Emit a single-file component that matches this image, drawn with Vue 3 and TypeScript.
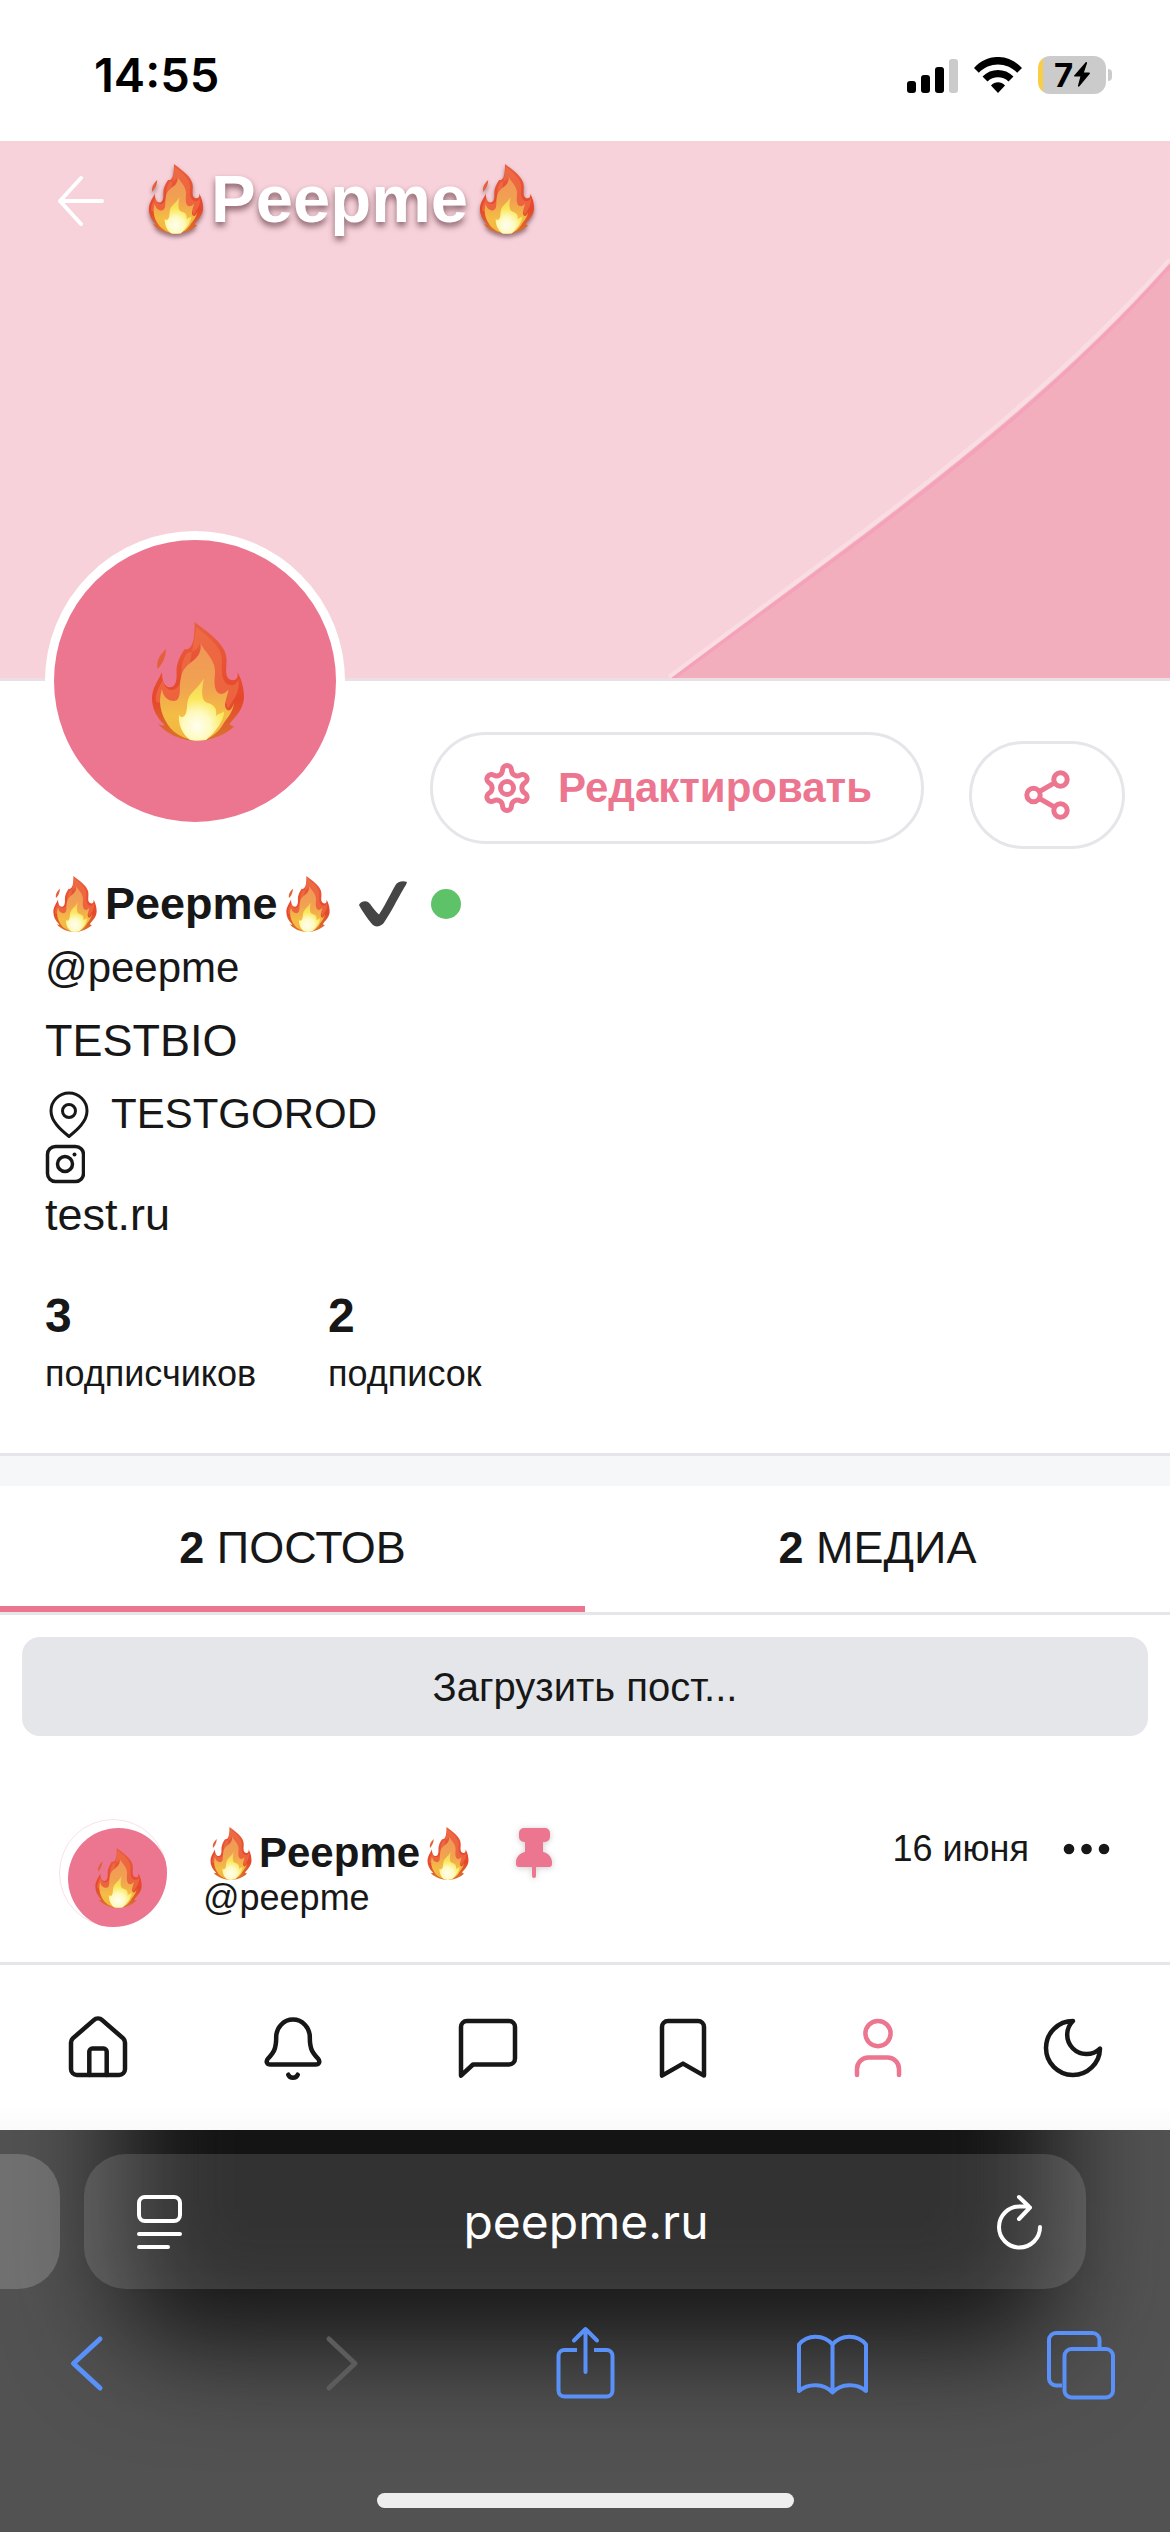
<script setup lang="ts">
import { ref } from 'vue'

interface NavItem {
  id: string
  label: string
  paths: string[]
}

const navItems: NavItem[] = [
  {
    id: 'home',
    label: 'Главная',
    paths: [
      'M3 10.2a2 2 0 0 1 .6-1.4l7-6.1a2 2 0 0 1 2.8 0l7 6.1a2 2 0 0 1 .6 1.4V19a2 2 0 0 1-2 2H5a2 2 0 0 1-2-2z',
      'M9.1 21v-7.8a1 1 0 0 1 1-1h3.8a1 1 0 0 1 1 1V21',
    ],
  },
  {
    id: 'alerts',
    label: 'Уведомления',
    paths: [
      'M6.4 8.4a5.6 5.9 0 0 1 11.2 0c0 4.2 1 5.3 2.7 7.1.9 1 .4 2-.8 2h-15c-1.2 0-1.7-1-.8-2 1.7-1.8 2.7-2.9 2.7-7.1z',
      'M10.4 20.9c.6 1.4 2.6 1.4 3.2 0',
    ],
  },
  {
    id: 'messages',
    label: 'Сообщения',
    paths: ['M3 21.2V5a2 2 0 0 1 2-2h14a2 2 0 0 1 2 2v10.5a2 2 0 0 1-2 2H7z'],
  },
  {
    id: 'bookmarks',
    label: 'Закладки',
    paths: ['M5 21.2V5a2 2 0 0 1 2-2h10a2 2 0 0 1 2 2v16.2l-7-4z'],
  },
  {
    id: 'profile',
    label: 'Профиль',
    paths: [
      'M12 3a4.2 4.2 0 1 1 0 8.4 4.2 4.2 0 0 1 0-8.4z',
      'M5 21v-2a3.8 3.8 0 0 1 3.8-3.8h6.4a3.8 3.8 0 0 1 3.8 3.8v2',
    ],
  },
  {
    id: 'theme',
    label: 'Тёмная тема',
    paths: ['M12 3a6.4 6.4 0 0 0 9 9.2 9 9 0 1 1-9-9.2z'],
  },
]

const tabs = [
  { id: 'posts', count: 2, label: 'ПОСТОВ' },
  { id: 'media', count: 2, label: 'МЕДИА' },
]

const stats = [
  { value: 3, label: 'подписчиков' },
  { value: 2, label: 'подписок' },
]

const activeTab = ref('posts')
const activeNav = ref('profile')

// Six rounded teeth: one tooth and its valley, turned by 60° each time.
function gearPath(center: number): string {
  const at = (x: number, y: number, turn: number): string => {
    const a = (turn * Math.PI) / 3
    const px = center + x * Math.cos(a) - y * Math.sin(a)
    const py = center + x * Math.sin(a) + y * Math.cos(a)
    return `${px.toFixed(2)} ${py.toFixed(2)}`
  }
  let d = `M${at(-4.5, -18, 0)}`
  for (let i = 0; i < 6; i++) {
    d += `A4.5 4.5 0 0 1 ${at(4.5, -18, i)}`
    d += `C${at(4.5, -13.5, i)} ${at(9.4, -10.6, i)} ${at(13.34, -12.9, i)}`
  }
  return d + 'z'
}
const gear = gearPath(25)
</script>

<template>
  <div class="screen">
    <svg class="defs" width="0" height="0" aria-hidden="true">
      <defs>
        <linearGradient id="flame-outer" x1="0" y1="0" x2="0" y2="1">
          <stop offset="0" stop-color="#e9603f" />
          <stop offset="0.65" stop-color="#e6472a" />
          <stop offset="1" stop-color="#d9742f" />
        </linearGradient>
        <linearGradient id="flame-mid" x1="0" y1="0" x2="0" y2="1">
          <stop offset="0" stop-color="#f0965a" />
          <stop offset="0.45" stop-color="#f1a350" />
          <stop offset="0.75" stop-color="#f4bd44" />
          <stop offset="1" stop-color="#f3b53c" />
        </linearGradient>
        <radialGradient id="flame-core" gradientUnits="userSpaceOnUse" cx="45" cy="104" r="46">
          <stop offset="0" stop-color="#fffef0" />
          <stop offset="0.3" stop-color="#fefac0" />
          <stop offset="0.6" stop-color="#fae75a" />
          <stop offset="1" stop-color="#f6cf5c" />
        </radialGradient>
        <symbol id="flame" viewBox="0 0 92 119">
          <path fill="url(#flame-outer)" d="M42.5 0C54 9 75 22 74.6 38C74.5 45 73 52 76 56C80 60 87 59 85.5 50C90 58 92 67 92 75C92 87 83 95 77.5 102C79 104 81 104.5 82.3 104.3C73 113 59 119 45 119C29 119 12 111 5 100C7 103 10 104 12.6 103C4 95 0 86 0 76C0 66 6 59 10 50C10 60 13 65.5 18.4 65.3C24 65 25 57 24.5 50C24 42 28 34 32.5 27.3C38 28 43 24 42.5 0z" />
          <path fill="#ef7148" d="M44.5 5C56 15 71 25 70 40C69 52 71 62 78 63C84 64 86 59 86.5 57C88 74 80 78 76 87C72 70 64 74 61 64L48 20C47 28 40 30 35 31C28 42 30 47 29 57C27 71 13 72 11 58C5 68 3 73 4 80L30 85z" opacity="0.65" />
          <path fill="url(#flame-mid)" d="M48.2 20.3C51 29 64 37 63 51C62 61 62 71 69 72C73 72 74 69 76.5 68C75 76 70 85 76 88.5C79 89 81 84 82 81C81 91 74 97 70 104C64 113 56 118 45 118C34 118 22 112 16 103C8 91 6 79 10 67C11 75 16 79 22 79C30 78 27 66 28.5 58C30 46 36 43 42 38C47 34 50 28 48.2 20.3z" />
          <path fill="url(#flame-core)" d="M52 56C50 67 48 79 56 81C63 83 65 87 64 94C67 91 71 91 72 89C73 98 62 112 54 118C48 119 42 119 38 118C30 112 26 102 27 93C29 96 32 96 34 91C36 84 34 78 39 72C44 66 48 63 52 56z" />
          <path fill="#e4603c" d="M14 27C14 35 10 43 5.5 47C4 38 8 33 14 27z" />
        </symbol>
      </defs>
    </svg>

    <div class="status">
      <time class="clock">14:55</time>
      <div class="indicators">
        <svg width="51" height="36" viewBox="0 0 51 36" aria-label="Сигнал">
          <rect x="0" y="24" width="9" height="12" rx="3" />
          <rect x="14" y="18" width="9" height="18" rx="3" />
          <rect x="28" y="10" width="9" height="26" rx="3" />
          <rect x="42" y="2" width="9" height="34" rx="3" fill="#cbcbcb" />
        </svg>
        <svg width="48" height="36" viewBox="0 0 48 36" aria-label="Wi-Fi">
          <path d="M0 11C13-3.7 35-3.7 48 11l-4.8 4.8C32.500 4.7 15.5 4.7 4.8 15.8z" />
          <path d="M8.5 19.5c8.6-8.6 22.4-8.6 31 0l-5 5c-5.8-5.6-15.2-5.6-21 0z" />
          <path d="M17 28.4c3.9-4.1 10.1-4.1 14 0L24 36z" />
        </svg>
        <div class="battery">
          <div class="battery-body">
            <span>7</span>
            <svg width="16" height="25" viewBox="0 0 16 25" aria-hidden="true">
              <path d="M11.5.4L.4 13.2c-.6.7-.3 1.4.6 1.4h5.4L4 23.600c-.3 1.2.7 1.5 1.4.7L15.6 12c.6-.8.3-1.6-.6-1.6H9.9L13 1.2c.3-1.1-.7-1.6-1.5-.8z" />
            </svg>
          </div>
          <span class="battery-tip"></span>
        </div>
      </div>
    </div>

    <header class="cover">
      <svg class="cover-art" viewBox="0 0 1170 537" preserveAspectRatio="xMaxYMax slice" aria-hidden="true">
        <rect width="1170" height="537" fill="#f7d2da" />
        <path d="M671 537C860 395 1030 280 1170 122V537z" fill="#f3aebd" />
        <path d="M669 536C858 393 1028 278 1170 118" fill="none" stroke="#f9dde2" stroke-width="4" />
        <path d="M673 538C862 397 1032 282 1172 123" fill="none" stroke="#f4a2ba" stroke-width="3" />
      </svg>
      <div class="cover-bar">
        <button class="icon-button" type="button" aria-label="Назад">
          <svg width="48" height="54" viewBox="0 0 48 54" fill="none" stroke="#fff" stroke-width="4" stroke-linecap="round" stroke-linejoin="round">
            <path d="M45 29H3M24 6L3 29l21 23" />
          </svg>
        </button>
        <h1>
          <svg class="flame-lg" role="img" aria-label="огонь"><use href="#flame" /></svg>
          <span>Peepme</span>
          <svg class="flame-lg" role="img" aria-label="огонь"><use href="#flame" /></svg>
        </h1>
      </div>
    </header>

    <main>
      <section class="profile">
        <div class="profile-top">
          <div class="avatar">
            <svg width="92" height="119" aria-hidden="true"><use href="#flame" /></svg>
          </div>
          <div class="actions">
            <button class="pill edit" type="button">
              <svg width="50" height="50" viewBox="0 0 50 50" fill="none" stroke="currentColor" stroke-width="5" stroke-linejoin="round" aria-hidden="true">
                <path :d="gear" />
                <circle cx="25" cy="25" r="6.5" />
              </svg>
              Редактировать
            </button>
            <button class="pill share" type="button" aria-label="Поделиться">
              <svg width="46" height="50" viewBox="0 0 46 50" fill="none" stroke="currentColor" stroke-width="5">
                <circle cx="36.5" cy="9.5" r="6.7" />
                <circle cx="9.5" cy="25" r="6.7" />
                <circle cx="36.5" cy="40.5" r="6.7" />
                <path d="M15.5 21.5l15-8.6M15.5 28.5l15 8.6" />
              </svg>
            </button>
          </div>
        </div>

        <h2 class="name">
          <svg class="flame-md" role="img" aria-label="огонь"><use href="#flame" /></svg>
          <span>Peepme</span>
          <svg class="flame-md" role="img" aria-label="огонь"><use href="#flame" /></svg>
          <svg class="check" width="48" height="46" viewBox="0 0 48 46" role="img" aria-label="Подтверждён">
            <path fill="#454545" d="M0 24C1 21 6 19 9 21C12 23 14 28 20 33.5C24 28 31 14 36 5C38 .5 44-.5 47.5.8C48.500 1.500 47 4 45 7C38 19 31 33 26 40C22.500 46.500 16 47 12.5 42.500C8 37 2.500 29 0 24z" />
          </svg>
          <span class="online" role="img" aria-label="В сети"></span>
        </h2>
        <p class="handle">@peepme</p>
        <p class="bio">TESTBIO</p>
        <p class="place">
          <svg width="44" height="48" viewBox="0 0 44 48" fill="none" stroke="currentColor" stroke-width="3" stroke-linejoin="round" aria-hidden="true">
            <path d="M24 46.500C16 40 6 31.500 6 21a18 18 0 0 1 36 0C42 31.500 32 40 24 46.500z" />
            <circle cx="24" cy="21" r="6.500" />
          </svg>
          TESTGOROD
        </p>
        <a class="insta" href="#" aria-label="Instagram">
          <svg width="40" height="40" viewBox="0 0 40 40" fill="none" stroke="currentColor" stroke-width="3.500">
            <rect x="2.500" y="2.500" width="36" height="35" rx="8" />
            <circle cx="20" cy="20" r="7.500" />
            <circle cx="29.500" cy="10.500" r="2" fill="currentColor" stroke="none" />
          </svg>
        </a>
        <a class="site" href="#">test.ru</a>

        <ul class="stats">
          <li v-for="s in stats" :key="s.label">
            <strong>{{ s.value }}</strong>
            <span>{{ s.label }}</span>
          </li>
        </ul>
      </section>

      <div class="tabs" role="tablist">
        <button
          v-for="t in tabs"
          :key="t.id"
          type="button"
          role="tab"
          class="tab"
          :class="{ active: t.id === activeTab }"
          :aria-selected="t.id === activeTab"
          @click="activeTab = t.id"
        >
          <b>{{ t.count }}</b> {{ t.label }}
        </button>
      </div>

      <section class="feed">
        <button class="load" type="button">Загрузить пост...</button>

        <article class="post">
          <svg class="post-avatar" width="108" height="108" viewBox="0 0 108 108" aria-hidden="true">
            <clipPath id="post-avatar-clip"><circle cx="54" cy="54" r="54" /></clipPath>
            <circle cx="54" cy="54" r="53.5" fill="#fff" stroke="#fae0e6" stroke-width="1" />
            <circle cx="59.500" cy="59.500" r="50.500" fill="#ec7690" clip-path="url(#post-avatar-clip)" />
            <use href="#flame" x="36" y="29" width="47" height="60" />
          </svg>
          <div class="author">
            <h3>
              <svg class="flame-sm" role="img" aria-label="огонь"><use href="#flame" /></svg>
              <span>Peepme</span>
              <svg class="flame-sm" role="img" aria-label="огонь"><use href="#flame" /></svg>
              <svg class="pin" width="36" height="50" viewBox="0 0 36 50" role="img" aria-label="Закреплено">
                <path fill="#ec7690" d="M8 0h21a5 5 0 0 1 5 5v4a5 5 0 0 1-5 5h-2v10c5 1 9 5 9 10v2a3 3 0 0 1-3 3H20v9a2 2 0 0 1-4 0v-9H3a3 3 0 0 1-3-3v-2c0-5 4-9 9-10V14H8a5 5 0 0 1-5-5V5a5 5 0 0 1 5-5z" />
              </svg>
            </h3>
            <span class="post-handle">@peepme</span>
          </div>
          <div class="post-meta">
            <time>16 июня</time>
            <button class="icon-button" type="button" aria-label="Ещё">
              <svg width="48" height="12" viewBox="0 0 48 12" fill="#171717">
                <circle cx="6" cy="6" r="5.300" />
                <circle cx="23.500" cy="6" r="5.300" />
                <circle cx="41" cy="6" r="5.300" />
              </svg>
            </button>
          </div>
        </article>
      </section>
    </main>

    <nav class="nav">
      <button
        v-for="n in navItems"
        :key="n.id"
        type="button"
        class="nav-item"
        :class="{ active: n.id === activeNav }"
        :aria-label="n.label"
        @click="activeNav = n.id"
      >
        <svg width="72" height="72" viewBox="0 0 24 24" fill="none" stroke="currentColor" stroke-width="1.5" stroke-linecap="round" stroke-linejoin="round">
          <path v-for="p in n.paths" :key="p" :d="p" />
        </svg>
      </button>
    </nav>

    <footer class="browser">
      <div class="address-row">
        <div class="prev-tab"></div>
        <div class="address">
          <button class="icon-button" type="button" aria-label="Вид страницы">
            <svg width="46" height="54" viewBox="0 0 46 54" fill="none" stroke="#fff" stroke-width="4" stroke-linecap="round">
              <rect x="2" y="2" width="41" height="24" rx="6" />
              <path d="M2 39h41M2 52h29" />
            </svg>
          </button>
          <span class="url">peepme.ru</span>
          <button class="icon-button" type="button" aria-label="Обновить">
            <svg width="54" height="56" viewBox="-8 0 54 56" fill="none" stroke="#fff" stroke-width="4" stroke-linecap="round" stroke-linejoin="round">
              <path d="M43 33A20.500 20.500 0 1 1 22.500 12.500H32M22 3l11 10.500L22 25" />
            </svg>
          </button>
        </div>
      </div>
      <div class="tools">
        <button class="icon-button" type="button" aria-label="Назад">
          <svg width="72" height="74" viewBox="0 0 72 74" fill="none" stroke="currentColor" stroke-width="5" stroke-linecap="round" stroke-linejoin="round">
            <path d="M50 13L23.500 37.500 50 62" />
          </svg>
        </button>
        <button class="icon-button" type="button" aria-label="Вперёд" disabled>
          <svg width="72" height="74" viewBox="0 0 72 74" fill="none" stroke="#5c5c5c" stroke-width="5" stroke-linecap="round" stroke-linejoin="round">
            <path d="M30 13l26 24.500L30 62" />
          </svg>
        </button>
        <button class="icon-button" type="button" aria-label="Поделиться">
          <svg width="72" height="74" viewBox="0 0 72 74" fill="none" stroke="currentColor" stroke-width="4" stroke-linecap="round" stroke-linejoin="round">
            <path stroke-linecap="butt" d="M30 24H17.500a6 6 0 0 0-6 6v34.500a6 6 0 0 0 6 6h42a6 6 0 0 0 6-6V30a6 6 0 0 0-6-6H47" />
            <path d="M38.500 46V4M27 14.500L38.500 3 50 14.500" />
          </svg>
        </button>
        <button class="icon-button" type="button" aria-label="Закладки">
          <svg width="72" height="74" viewBox="0 0 72 74" fill="none" stroke="currentColor" stroke-width="4" stroke-linejoin="round">
            <path d="M36.500 18.500C28 8 11 8 3 18.500V65c9-8 25-8 33.500 1.500C45 57 61 57 70 65V18.500C62 8 45 8 36.500 18.500zV66" />
          </svg>
        </button>
        <button class="icon-button" type="button" aria-label="Вкладки">
          <svg width="72" height="74" viewBox="0 0 72 74" fill="none" stroke="currentColor" stroke-width="4">
            <path d="M18 59.500H12a7 7 0 0 1-7-7V14a7 7 0 0 1 7-7h36.500a7 7 0 0 1 7 7v9" />
            <rect x="20.500" y="23" width="48.500" height="48.500" rx="7" />
          </svg>
        </button>
      </div>
      <div class="home-bar"></div>
    </footer>
  </div>
</template>

<style>
body {
  margin: 0;
  background: #fff;
}
</style>

<style scoped>
.screen {
  display: flex;
  flex-direction: column;
  min-height: 100vh;
  background: #fff;
  color: #171717;
  font-family: "Liberation Sans", Arial, sans-serif;
  font-size: 42px;
  line-height: 48px;
}

svg {
  display: block;
  flex: none;
}

.defs {
  position: absolute;
}

h1,
h2,
h3,
p,
ul {
  margin: 0;
  padding: 0;
}

button {
  margin: 0;
  padding: 0;
  border: 0;
  background: none;
  color: inherit;
  font: inherit;
  cursor: pointer;
}

a {
  color: inherit;
  text-decoration: none;
}

main {
  flex: 1;
}

.icon-button {
  flex: none;
}

/* status bar */
.status {
  display: flex;
  align-items: center;
  justify-content: space-between;
  height: 141px;
  padding: 8px 58px 0 94px;
  box-sizing: border-box;
  font-family: Inter, sans-serif;
}

.clock {
  color: #000;
  font-size: 47px;
  font-weight: 600;
}

.indicators {
  display: flex;
  align-items: center;
  gap: 16px;
}

.battery {
  display: flex;
  align-items: center;
  gap: 2px;
}

.battery-body {
  display: flex;
  align-items: center;
  justify-content: center;
  gap: 1px;
  width: 68px;
  height: 38px;
  border-radius: 12px;
  background: linear-gradient(to right, #f7ce46 5px, #cbcbcb 5px);
  color: #000;
  font-size: 33px;
  font-weight: 700;
  line-height: 38px;
}

.battery-tip {
  width: 4px;
  height: 12px;
  border-radius: 0 6px 6px 0;
  background: #cbcbcb;
}

/* cover */
.cover {
  position: relative;
  height: 537px;
  border-bottom: 3px solid #e9dfe4;
}

.cover-art {
  position: absolute;
  inset: 0;
  width: 100%;
  height: 100%;
}

.cover-bar {
  position: relative;
  display: flex;
  align-items: center;
  gap: 32px;
  padding: 19px 57px;
}

.cover-bar h1 {
  display: flex;
  align-items: center;
  color: #fff;
  font-size: 67px;
  line-height: 78px;
  text-shadow: 0 4px 6px rgba(60, 20, 30, 0.6);
}

.flame-lg {
  width: 56px;
  height: 70px;
  margin: 0 7px 0 11px;
  filter: drop-shadow(0 3px 2px rgba(60, 20, 30, 0.5));
}

.flame-md {
  width: 44px;
  height: 56px;
  margin: 0 8px;
}

.flame-sm {
  width: 42px;
  height: 53px;
  margin: 0 7px;
}

/* profile */
.profile {
  padding: 0 45px 58px;
  border-bottom: 3px solid #e5e6ea;
}

.profile-top {
  display: flex;
  align-items: flex-start;
  justify-content: space-between;
  margin-bottom: 28px;
}

.avatar {
  position: relative;
  display: flex;
  align-items: center;
  justify-content: center;
  box-sizing: border-box;
  width: 300px;
  height: 300px;
  margin-top: -150px;
  padding-left: 6px;
  border: 9px solid #fff;
  border-radius: 50%;
  background: #ec7690;
}

.actions {
  display: flex;
  align-items: flex-start;
  gap: 45px;
  padding-top: 51px;
}

.pill {
  display: flex;
  align-items: center;
  border: 3px solid #e5e6ea;
  border-radius: 56px;
  color: #ec7690;
  font-weight: 700;
}

.edit {
  gap: 26px;
  padding: 28px 49px;
}

.share {
  justify-content: center;
  margin-top: 9px;
  padding: 26px 52px;
}

.name {
  display: flex;
  align-items: center;
  height: 54px;
  font-size: 45px;
  line-height: 54px;
}

.check {
  margin-left: 21px;
}

.online {
  width: 30px;
  height: 30px;
  margin-left: 24px;
  border-radius: 50%;
  background: #5ec269;
}

.handle {
  margin-top: 13px;
}

.bio {
  margin: 22px 0;
  font-size: 45px;
  line-height: 54px;
}

.place {
  display: flex;
  align-items: center;
  gap: 22px;
  margin-bottom: 6px;
}

.insta {
  display: flex;
  margin-bottom: 4px;
}

.site {
  display: block;
  font-size: 45px;
  line-height: 54px;
}

.stats {
  display: flex;
  gap: 72px;
  margin-top: 47px;
  list-style: none;
}

.stats li {
  display: flex;
  flex-direction: column;
  gap: 10px;
  font-size: 36px;
  line-height: 42px;
}

.stats strong {
  font-size: 48px;
  line-height: 54px;
}

/* tabs */
.tabs {
  display: flex;
  border-top: 30px solid #f6f7f9;
  border-bottom: 3px solid #e5e6ea;
}

.tab {
  flex: 1;
  padding: 35px 0 31px;
  border-bottom: 6px solid transparent;
  font-size: 45px;
  line-height: 54px;
}

.tab.active {
  border-bottom-color: #ec7690;
}

/* feed */
.feed {
  padding: 22px 22px 35px;
}

.load {
  display: block;
  width: 100%;
  padding: 26px 0 25px;
  border-radius: 18px;
  background: #e5e6ea;
  font-size: 40px;
}

.post {
  display: flex;
  align-items: flex-start;
  gap: 36px;
  padding: 83px 37px 0;
}

.author {
  flex: 1;
  padding-top: 10px;
}

.author h3 {
  display: flex;
  align-items: center;
  height: 48px;
  font-size: 42px;
}

.pin {
  margin-left: 40px;
  filter: drop-shadow(0 1px 3px rgba(0, 0, 0, 0.2));
}

.post-handle {
  display: block;
  font-size: 36px;
  line-height: 42px;
}

.post-meta {
  display: flex;
  align-items: center;
  gap: 34px;
  padding-top: 9px;
  font-size: 36px;
  line-height: 42px;
}

/* site navigation */
.nav {
  display: flex;
  border-top: 3px solid #e5e6ea;
  background: linear-gradient(to top, #fafafa, #fff 24px);
}

.nav-item {
  display: flex;
  flex: 1;
  justify-content: center;
  padding: 47px 0 46px;
}

.nav-item.active {
  color: #ec7690;
}

/* browser chrome */
.browser {
  position: relative;
  overflow: hidden;
  padding: 24px 0;
  background: #525252;
}

.browser::before {
  content: "";
  position: absolute;
  top: -200px;
  right: 116px;
  left: 120px;
  height: 412px;
  border-radius: 60px;
  background: #141414;
  filter: blur(54px);
}

.address-row {
  position: relative;
  display: flex;
  gap: 24px;
  margin-right: 84px;
}

.prev-tab {
  width: 60px;
  border-radius: 0 42px 42px 0;
  background: rgba(255, 255, 255, 0.18);
}

.address {
  display: flex;
  flex: 1;
  align-items: center;
  justify-content: space-between;
  height: 135px;
  padding: 0 43px 0 53px;
  border-radius: 42px;
  background: rgba(255, 255, 255, 0.13);
}

.url {
  color: #fff;
  font-family: Inter, sans-serif;
  font-size: 48px;
  line-height: 60px;
}

.tools {
  position: relative;
  display: flex;
  justify-content: space-between;
  padding: 37px 54px 93px 50px;
  color: #5991f8;
}

.home-bar {
  position: relative;
  width: 417px;
  height: 15px;
  margin: 0 auto;
  border-radius: 8px;
  background: #eee;
}
</style>
